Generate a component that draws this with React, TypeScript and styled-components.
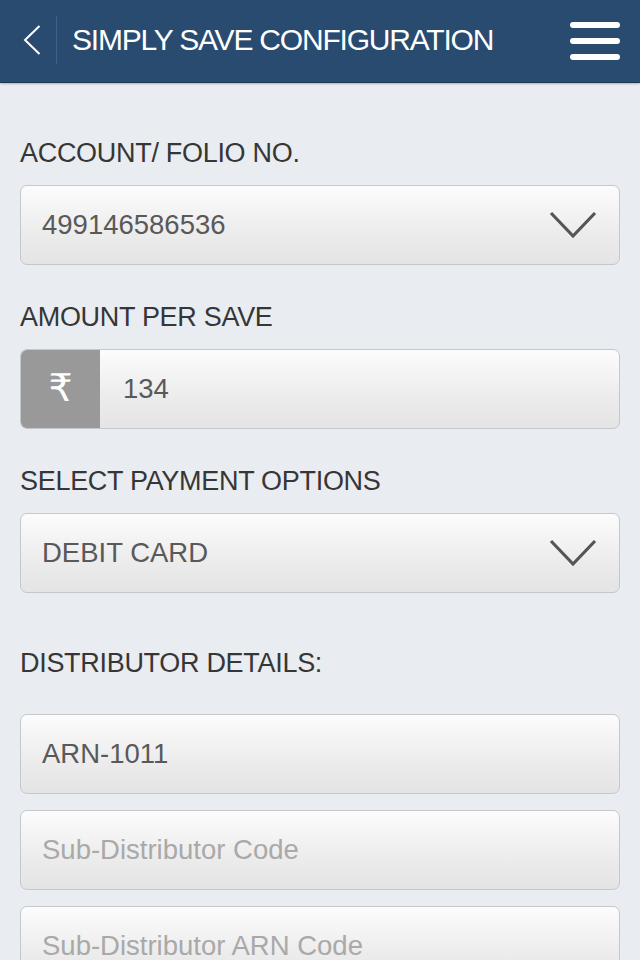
import React from 'react'
import styled, { createGlobalStyle } from 'styled-components'

const GlobalStyle = createGlobalStyle`
    html, body {
        margin: 0;
        padding: 0;
        background: #e9ecf1;
        font-family: "Liberation Sans", Arial, sans-serif;
    }
`

const StyledPage = styled.div`
    width: 640px;
    min-height: 960px;
    background: #e9ecf1;
    overflow: hidden;
`

const StyledHeader = styled.header`
    display: flex;
    flex-direction: row;
    align-items: center;
    height: 83px;
    padding: 0 20px 3px 20px;
    box-sizing: border-box;
    background: #294b70;
    border-bottom: 1px solid #1c3856;
    box-shadow: 0 1px 2px rgba(0, 0, 0, 0.25);
`

const StyledBack = styled.button`
    display: flex;
    align-items: center;
    justify-content: flex-start;
    width: 37px;
    height: 48px;
    padding: 0 0 0 3px;
    border: none;
    background: transparent;
    border-right: 1px solid #3f6189;
    cursor: pointer;
`

const StyledTitle = styled.h1`
    flex: 1;
    margin: 0 0 0 15px;
    color: #ffffff;
    font-size: 30px;
    font-weight: normal;
    letter-spacing: -1.2px;
    white-space: nowrap;
`

const StyledMenu = styled.button`
    display: flex;
    flex-direction: column;
    gap: 10px;
    width: 50px;
    padding: 0;
    margin-top: 3px;
    border: none;
    background: transparent;
    cursor: pointer;
`

const StyledMenuBar = styled.span`
    display: block;
    height: 6px;
    border-radius: 3px;
    background: #ffffff;
`

const StyledForm = styled.main`
    display: flex;
    flex-direction: column;
    padding: 54px 20px 0 20px;
`

const StyledLabel = styled.div<{ $section?: boolean }>`
    height: 32px;
    line-height: 32px;
    margin-top: ${p => (p.$section ? '54px' : '36px')};
    margin-bottom: ${p => (p.$section ? '35px' : '16px')};
    color: #363636;
    font-size: 27px;
    letter-spacing: -0.3px;
    &:first-child {
        margin-top: 0;
    }
`

const StyledBox = styled.div`
    display: flex;
    flex-direction: row;
    align-items: center;
    height: 80px;
    box-sizing: border-box;
    border: 1.5px solid #c4c7cb;
    border-radius: 7px;
    background: linear-gradient(to bottom, #fcfcfc 0%, #ececec 60%, #e4e4e4 100%);
    overflow: hidden;
    & + & {
        margin-top: 16px;
    }
`

const StyledValue = styled.span`
    flex: 1;
    padding-left: 21px;
    color: #595959;
    font-size: 27.5px;
`

const StyledInput = styled.input<{ $inset?: number }>`
    flex: 1;
    height: 100%;
    padding: 0 0 0 ${p => p.$inset ?? 21}px;
    border: none;
    outline: none;
    background: transparent;
    color: #595959;
    font-family: "Liberation Sans", Arial, sans-serif;
    font-size: 27.5px;
    &::placeholder {
        color: #a9a9a9;
    }
`

const StyledChevron = styled.svg`
    width: 48px;
    height: 28px;
    margin-right: 22px;
`

const StyledCurrency = styled.span`
    display: flex;
    align-items: center;
    justify-content: center;
    width: 79px;
    height: 100%;
    padding-bottom: 2px;
    box-sizing: border-box;
    background: #999999;
    color: #ffffff;
    font-family: "DejaVu Sans", "Noto Sans", sans-serif;
    font-size: 38px;
`

const Chevron = () => (
    <StyledChevron viewBox="0 0 48 28">
        <path d="M2 2 L24 25 L46 2" fill="none" stroke="#555555" strokeWidth="3.2" />
    </StyledChevron>
)

const SelectBox = (props: { value: string }) => (
    <StyledBox>
        <StyledValue>{props.value}</StyledValue>
        <Chevron />
    </StyledBox>
)

const App = () => {
    return (
        <StyledPage>
            <GlobalStyle />
            <StyledHeader>
                <StyledBack aria-label="Back">
                    <svg width="18" height="30" viewBox="0 0 18 30">
                        <path d="M16.5 1 L2 15 L16.5 29" fill="none" stroke="#ffffff" strokeWidth="2" />
                    </svg>
                </StyledBack>
                <StyledTitle>SIMPLY SAVE CONFIGURATION</StyledTitle>
                <StyledMenu aria-label="Menu">
                    <StyledMenuBar />
                    <StyledMenuBar />
                    <StyledMenuBar />
                </StyledMenu>
            </StyledHeader>

            <StyledForm>
                <StyledLabel>ACCOUNT/ FOLIO NO.</StyledLabel>
                <SelectBox value="499146586536" />

                <StyledLabel>AMOUNT PER SAVE</StyledLabel>
                <StyledBox>
                    <StyledCurrency>₹</StyledCurrency>
                    <StyledInput $inset={23} defaultValue="134" />
                </StyledBox>

                <StyledLabel>SELECT PAYMENT OPTIONS</StyledLabel>
                <SelectBox value="DEBIT CARD" />

                <StyledLabel $section>DISTRIBUTOR DETAILS:</StyledLabel>
                <StyledBox>
                    <StyledInput defaultValue="ARN-1011" />
                </StyledBox>
                <StyledBox>
                    <StyledInput placeholder="Sub-Distributor Code" />
                </StyledBox>
                <StyledBox>
                    <StyledInput placeholder="Sub-Distributor ARN Code" />
                </StyledBox>
            </StyledForm>
        </StyledPage>
    )
}

export default App
